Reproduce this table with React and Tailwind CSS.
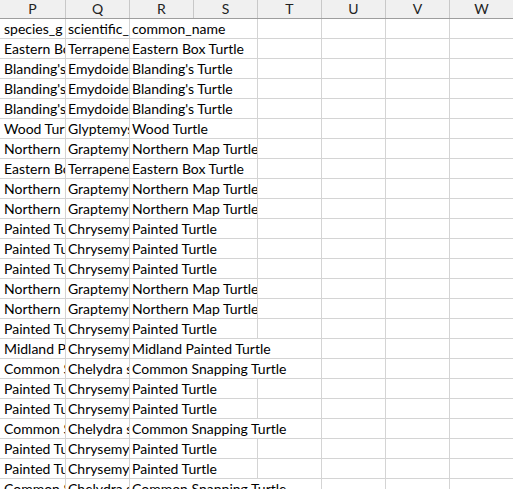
import React from "react";

const rows = [
  ["species_g", "scientific_", "common_name"],
  ["Eastern Box Turtle", "Terrapene carolina", "Eastern Box Turtle"],
  ["Blanding's Turtle", "Emydoidea blandingii", "Blanding's Turtle"],
  ["Blanding's Turtle", "Emydoidea blandingii", "Blanding's Turtle"],
  ["Blanding's Turtle", "Emydoidea blandingii", "Blanding's Turtle"],
  ["Wood Turtle", "Glyptemys insculpta", "Wood Turtle"],
  ["Northern Map Turtle", "Graptemys geographica", "Northern Map Turtle"],
  ["Eastern Box Turtle", "Terrapene carolina", "Eastern Box Turtle"],
  ["Northern Map Turtle", "Graptemys geographica", "Northern Map Turtle"],
  ["Northern Map Turtle", "Graptemys geographica", "Northern Map Turtle"],
  ["Painted Turtle", "Chrysemys picta", "Painted Turtle"],
  ["Painted Turtle", "Chrysemys picta", "Painted Turtle"],
  ["Painted Turtle", "Chrysemys picta", "Painted Turtle"],
  ["Northern Map Turtle", "Graptemys geographica", "Northern Map Turtle"],
  ["Northern Map Turtle", "Graptemys geographica", "Northern Map Turtle"],
  ["Painted Turtle", "Chrysemys picta", "Painted Turtle"],
  ["Midland Painted Turtle", "Chrysemys picta marginata", "Midland Painted Turtle"],
  ["Common Snapping Turtle", "Chelydra serpentina", "Common Snapping Turtle"],
  ["Painted Turtle", "Chrysemys picta", "Painted Turtle"],
  ["Painted Turtle", "Chrysemys picta", "Painted Turtle"],
  ["Common Snapping Turtle", "Chelydra serpentina", "Common Snapping Turtle"],
  ["Painted Turtle", "Chrysemys picta", "Painted Turtle"],
  ["Painted Turtle", "Chrysemys picta", "Painted Turtle"],
  ["Common Snapping Turtle", "Chelydra serpentina", "Common Snapping Turtle"],
];

function spanFor(text) {
  if (text.length > 19) return 3;
  if (text.length > 8) return 2;
  return 1;
}

const font = { fontFamily: "Lato, 'Noto Sans', sans-serif" };

export default function App() {
  const headers = ["P", "Q", "R", "S", "T", "U", "V", "W"];
  return (
    <div className="w-[513px] h-[489px] overflow-hidden bg-white text-[#000]" style={font}>
      <div className="flex h-[19px] bg-[#f0f0f0] border-b border-[#9e9e9e] w-[560px]">
        {headers.map((h, i) => (
          <div
            key={h}
            className={`${i === 0 ? "w-[66px]" : "w-[64px]"} shrink-0 h-full border-r border-[#c8c8c8] flex items-center justify-center text-[14px] text-[#222] leading-none`}
          >
            {h}
          </div>
        ))}
      </div>
      {rows.map((r, ri) => {
        const span = spanFor(r[2]);
        const rest = 5 - (span - 1);
        return (
          <div key={ri} className="flex h-[20px] border-b border-[#d4d4d4] w-[560px] text-[14px] leading-[20px]">
            <div className="w-[66px] shrink-0 border-r border-[#d4d4d4] overflow-hidden whitespace-nowrap pl-[4px]">
              {r[0]}
            </div>
            <div className="w-[64px] shrink-0 border-r border-[#d4d4d4] overflow-hidden whitespace-nowrap pl-[2px]">
              {r[1]}
            </div>
            <div
              className={`${span === 3 ? "w-[192px]" : span === 2 ? "w-[128px]" : "w-[64px]"} shrink-0 border-r border-[#d4d4d4] overflow-hidden whitespace-nowrap pl-[2px]`}
            >
              {r[2]}
            </div>
            {Array.from({ length: rest }).map((_, i) => (
              <div key={i} className="w-[64px] shrink-0 border-r border-[#d4d4d4]" />
            ))}
          </div>
        );
      })}
    </div>
  );
}
